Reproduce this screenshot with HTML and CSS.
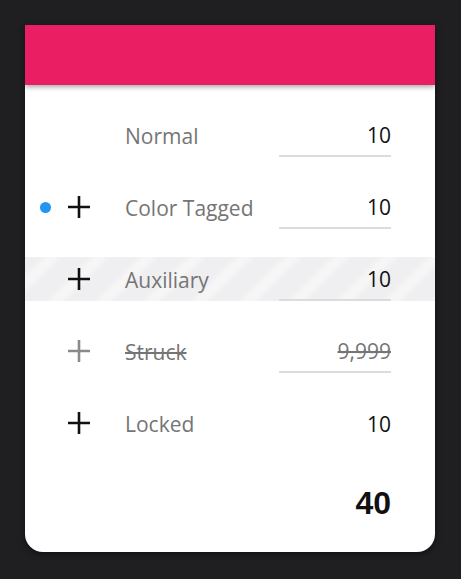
FILE: index.html
```html
<!DOCTYPE html>
<html>
<head>
<meta charset="utf-8">
<link rel="stylesheet" href="styles.css">
</head>
<body>
<div class="card">
  <div class="header"></div>
  <div class="list">
    <div class="row">
      <span class="dot none"></span>
      <span class="plus none"></span>
      <span class="label">Normal</span>
      <span class="value field">10</span>
    </div>
    <div class="row">
      <span class="dot"></span>
      <svg class="plus" viewBox="0 0 22 22"><path d="M11 0v22M0 11h22"/></svg>
      <span class="label">Color Tagged</span>
      <span class="value field">10</span>
    </div>
    <div class="row aux">
      <span class="dot none"></span>
      <svg class="plus" viewBox="0 0 22 22"><path d="M11 0v22M0 11h22"/></svg>
      <span class="label">Auxiliary</span>
      <span class="value field">10</span>
    </div>
    <div class="row struck">
      <span class="dot none"></span>
      <svg class="plus" viewBox="0 0 22 22"><path d="M11 0v22M0 11h22"/></svg>
      <span class="label">Struck</span>
      <span class="value field">9,999</span>
    </div>
    <div class="row">
      <span class="dot none"></span>
      <svg class="plus" viewBox="0 0 22 22"><path d="M11 0v22M0 11h22"/></svg>
      <span class="label">Locked</span>
      <span class="value">10</span>
    </div>
    <div class="total-row">
      <span class="total">40</span>
    </div>
  </div>
</div>
</body>
</html>
```
FILE: styles.css
```css
html, body {
  margin: 0;
  padding: 0;
}
body {
  background: #1f1e21;
  width: 461px;
  height: 579px;
  font-family: "Open Sans", "Noto Sans", sans-serif;
}
.card {
  margin: 25px 0 0 25px;
  width: 410px;
  height: 527px;
  background: #fff;
  border-radius: 0 0 18px 18px;
  overflow: hidden;
  box-shadow: 0 2px 6px rgba(0,0,0,0.5);
}
.header {
  height: 60px;
  background: #e91e63;
  box-shadow: 0 2px 5px rgba(0,0,0,0.35);
  position: relative;
  z-index: 1;
}
.list {
  display: flex;
  flex-direction: column;
  gap: 28px;
  padding-top: 28px;
}
.row {
  height: 44px;
  display: flex;
  align-items: center;
  padding: 0 44px 0 15px;
}
.dot {
  width: 11px;
  height: 11px;
  border-radius: 50%;
  background: #2196f3;
  flex: none;
}
.dot.none { background: transparent; }
.plus {
  width: 22px;
  height: 22px;
  margin-left: 17px;
  flex: none;
  stroke: #111;
  stroke-width: 2.6;
  fill: none;
}
span.plus { display: block; }
.label {
  flex: 1;
  margin-left: 35px;
  padding-top: 2px;
  font-size: 21px;
  color: #757575;
}
.value {
  width: 112px;
  height: 44px;
  box-sizing: border-box;
  display: flex;
  align-items: center;
  justify-content: flex-end;
  padding-top: 2px;
  font-size: 21px;
  color: #111;
}
.field {
  border-bottom: 2px solid #dcdcdc;
}
.aux {
  background: repeating-linear-gradient(135deg, #efeef0 0, #efeef0 10px, #f6f6f7 17px, #f6f6f7 21px, #efeef0 28px, #efeef0 34px);
}
.struck .plus { stroke: #8a8a8a; }
.struck .label,
.struck .value {
  color: #757575;
  text-decoration: line-through;
}
.total-row {
  display: flex;
  justify-content: flex-end;
  padding: 12px 44px 0 0;
}
.total {
  font-family: "Liberation Sans", Arial, sans-serif;
  font-weight: bold;
  font-size: 32px;
  color: #111;
}
```
